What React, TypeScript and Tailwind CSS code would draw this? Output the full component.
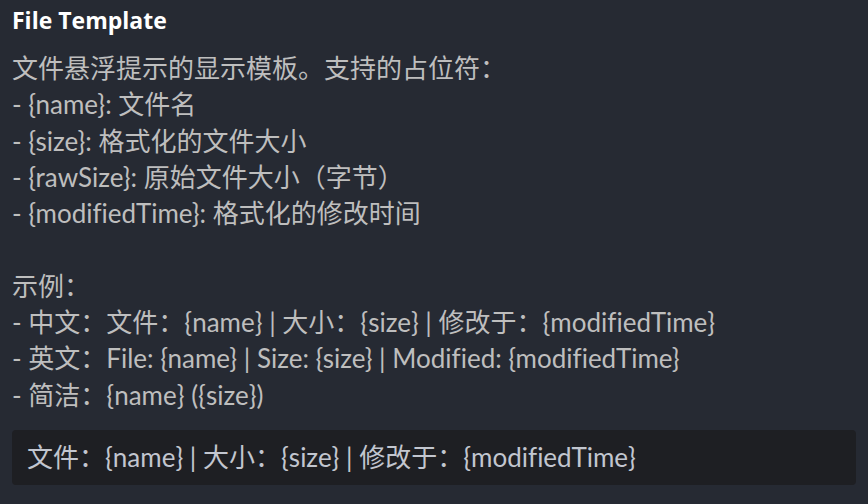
export default function App() {
  const lines = [
    '文件悬浮提示的显示模板。支持的占位符：',
    '- {name}: 文件名',
    '- {size}: 格式化的文件大小',
    '- {rawSize}: 原始文件大小（字节）',
    '- {modifiedTime}: 格式化的修改时间',
    '',
    '示例：',
    '- 中文：文件：{name} | 大小：{size} | 修改于：{modifiedTime}',
    '- 英文：File: {name} | Size: {size} | Modified: {modifiedTime}',
    '- 简洁：{name} ({size})',
  ];

  return (
    <main
      className="w-[868px] h-[504px] bg-[#262a33] px-3 pt-[5px] overflow-hidden [font-variant-ligatures:none]"
      style={{ fontFamily: 'Lato, "Noto Sans CJK SC", sans-serif' }}
    >
      <h1
        className="text-[23px] leading-[30px] font-bold text-white"
        style={{ fontFamily: '"Open Sans", "Noto Sans CJK SC", sans-serif' }}
      >
        File Template
      </h1>
      <div className="mt-[15px] text-[26px] leading-[36.3px] text-[#bebebe]">
        {lines.map((line, i) => (
          <div key={i} className="h-[36.3px] whitespace-pre">
            {line}
          </div>
        ))}
      </div>
      <div className="mt-[17px] h-[55px] rounded bg-[#1e1f23] px-[15px] flex items-center text-[26px] text-[#c2c6cf]">
        文件：{'{name}'} | 大小：{'{size}'} | 修改于：{'{modifiedTime}'}
      </div>
    </main>
  );
}
